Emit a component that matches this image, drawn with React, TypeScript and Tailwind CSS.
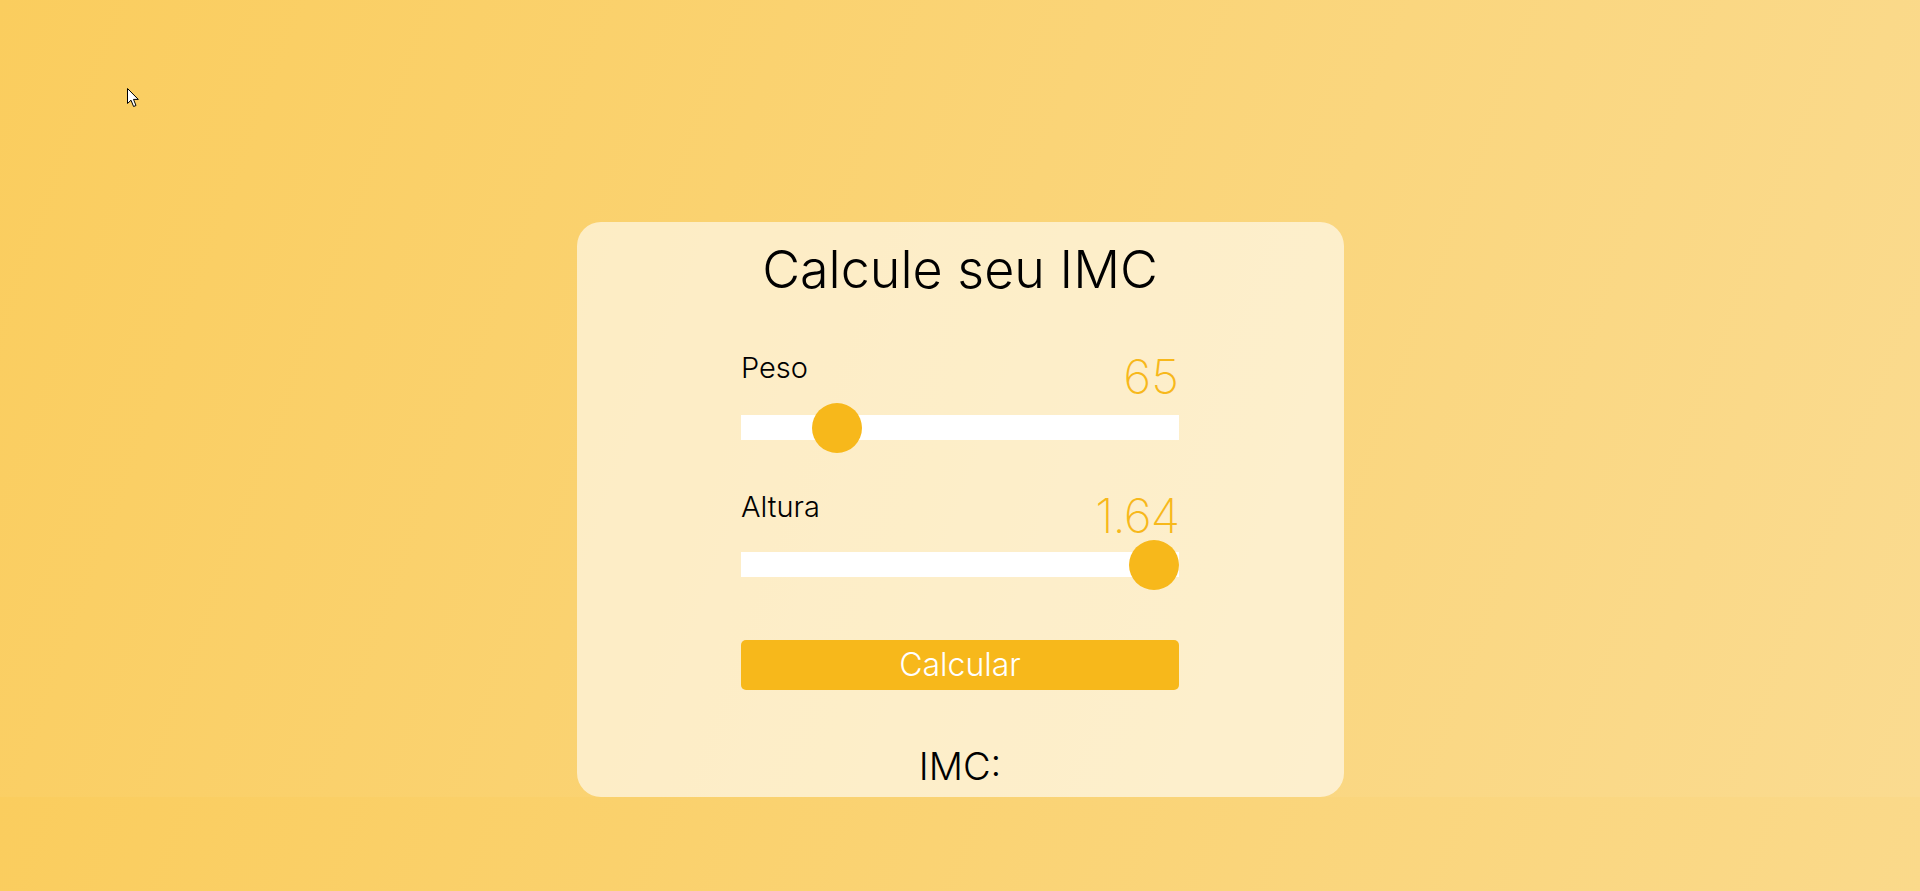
import { useState } from "react";

const rangeClass =
  "w-[438px] h-[25px] bg-white appearance-none outline-none cursor-pointer [&::-webkit-slider-thumb]:appearance-none [&::-webkit-slider-thumb]:w-[50px] [&::-webkit-slider-thumb]:h-[50px] [&::-webkit-slider-thumb]:rounded-full [&::-webkit-slider-thumb]:bg-[#f7b81b] [&::-webkit-slider-thumb]:border-0";

export default function App() {
  const [peso, setPeso] = useState(65);
  const [altura, setAltura] = useState(1.64);
  const [imc, setImc] = useState("");

  return (
    <div className="relative min-h-[891px] w-full bg-[linear-gradient(110deg,#facd5e,#fadb90)] bg-[length:100%_797px] bg-repeat font-['Inter',sans-serif]">
      {/* cursor from the screenshot */}
      <svg
        className="absolute left-[127px] top-[88px]"
        width="13"
        height="20"
        viewBox="0 0 13 20"
      >
        <path
          d="M0.5 0.5 L0.5 15.5 L4 12.2 L6.6 18.5 L9 17.5 L6.5 11.4 L11.3 11.4 Z"
          fill="#fff"
          stroke="#000"
          strokeWidth="1"
          strokeLinejoin="round"
        />
      </svg>

      <div className="h-[797px] flex justify-center pt-[222px]">
        <div className="w-[767px] h-[575px] rounded-[24px] bg-white/60 flex flex-col items-center pt-[22px]">
          <h1 className="text-[52px] leading-none font-light text-black">
            Calcule seu IMC
          </h1>

          <div className="w-[438px] mt-[57px]">
            <div className="flex justify-between items-start">
              <p className="text-[29px] leading-none font-light text-black">Peso</p>
              <p className="text-[48px] leading-none font-extralight text-[#f7b81b]">
                {peso}
              </p>
            </div>
            <input
              type="range"
              min={30}
              max={220}
              value={peso}
              onChange={(e) => setPeso(Number(e.target.value))}
              className={`${rangeClass} mt-[14px] block`}
            />
          </div>

          <div className="w-[438px] mt-[52px]">
            <div className="flex justify-between items-start">
              <p className="text-[29px] leading-none font-light text-black">Altura</p>
              <p className="text-[48px] leading-none font-extralight tracking-[-1px] text-[#f7b81b]">
                {altura.toFixed(2)}
              </p>
            </div>
            <input
              type="range"
              min={1.2}
              max={1.64}
              step={0.01}
              value={altura}
              onChange={(e) => setAltura(Number(e.target.value))}
              className={`${rangeClass} mt-[12px] block`}
            />
          </div>

          <button
            onClick={() => setImc((peso / (altura * altura)).toFixed(1))}
            className="w-[438px] h-[50px] mt-[63px] rounded-[5px] bg-[#f7b81b] text-white text-[32px] font-light leading-none flex items-center justify-center"
          >
            Calcular
          </button>

          <p className="mt-[57px] text-[38px] leading-none font-light text-black">
            IMC: {imc}
          </p>
        </div>
      </div>
    </div>
  );
}
